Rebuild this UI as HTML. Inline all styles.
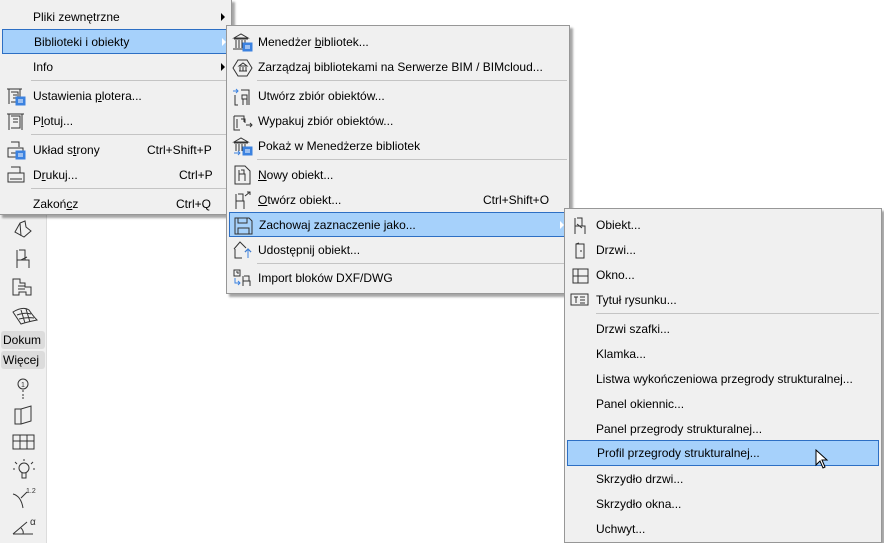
<!DOCTYPE html>
<html><head><meta charset="utf-8"><style>
body{margin:0;width:884px;height:543px;background:#fff;position:relative;overflow:hidden;font-family:"Segoe UI","Liberation Sans",sans-serif;font-size:12px;color:#000}
.tb{position:absolute;left:0;top:0;width:46px;height:543px;background:#f0f0f0;border-right:1px solid #dcdcdc}
.menu{position:absolute;background:#f0f0f0;border:1px solid #979797;box-shadow:3px 3px 2px rgba(0,0,0,.35)}
.it{position:absolute;left:0;right:0;height:25px;line-height:24px;white-space:nowrap}
.it .t{position:absolute}
.it .k{position:absolute}
.hl{background:#a6d1fb;border:1px solid #2d6fc4;box-sizing:border-box;left:2px;right:2px}
.sep{position:absolute;height:1px;background:#c4c4c4}
.ar{position:absolute;width:0;height:0;border-top:4px solid transparent;border-bottom:4px solid transparent;border-left:4px solid #000;top:8px}
.ic{position:absolute;top:4px}
u{text-decoration:underline}
.btn{position:absolute;left:1px;width:44px;height:18px;background:#dcdcdc;border-radius:3px;line-height:18px;font-size:12px;padding-left:2px;box-sizing:border-box;overflow:hidden;white-space:nowrap}
.ti{position:absolute;left:11px}
</style></head><body>
<div class="tb"></div>
<!-- toolbar icons -->
<svg class="ti" style="top:218px" width="24" height="22" viewBox="0 0 24 22" fill="none" stroke="#333"><path d="M4 14 L9 5 L14 3 L15 9 L20 13 L13 19 Z M9 5 L10 18"/></svg>
<svg class="ti" style="top:248px" width="24" height="22" viewBox="0 0 24 22" fill="none" stroke="#333"><path d="M6 2 v18 M6 12 h12 v8 M8 2 h6 v10 M10 12 l6 -3"/></svg>
<svg class="ti" style="top:276px" width="24" height="22" viewBox="0 0 24 22" fill="none" stroke="#333"><path d="M2 3 h7 v4 h5 v4 h6 v8 h-5 v-3 h-7 v3 h-6 Z M7 10 h7 M7 13 h7"/></svg>
<svg class="ti" style="top:304px" width="28" height="22" viewBox="0 0 28 22" fill="none" stroke="#333"><path d="M2 8 Q12 2 18 6 Q22 12 26 16 Q16 18 10 20 Q6 14 2 8 Z M6 11 Q14 8 20 10 M8 15 Q16 13 23 14 M10 6 L14 19 M15 5 L19 18"/></svg>
<div class="btn" style="top:331px">Dokum</div>
<div class="btn" style="top:351px">Więcej</div>
<svg class="ti" style="top:376px" width="24" height="24" viewBox="0 0 24 24" fill="none" stroke="#333"><circle cx="12" cy="8" r="5"/><path d="M12 14 v2 M12 18 v2 M12 21 v2"/><text x="10" y="11" font-size="7" fill="#333" stroke="none">1</text></svg>
<svg class="ti" style="top:404px" width="24" height="22" viewBox="0 0 24 22" fill="none" stroke="#333"><path d="M4 5 h6 v15 h-6 Z M10 5 l10 -3 v15 l-10 3"/></svg>
<svg class="ti" style="top:431px" width="26" height="22" viewBox="0 0 26 22" fill="none" stroke="#333"><path d="M2 4 h21 v14 h-21 Z M2 10 h21 M9 4 v14 M16 4 v14"/></svg>
<svg class="ti" style="top:458px" width="26" height="24" viewBox="0 0 26 24" fill="none" stroke="#333"><circle cx="13" cy="10" r="5"/><path d="M11 15 v5 h4 v-5 M13 1 v2 M4 4 l2 2 M22 4 l-2 2 M2 11 h2 M22 11 h2"/></svg>
<svg class="ti" style="top:486px" width="28" height="24" viewBox="0 0 28 24" fill="none" stroke="#333"><path d="M2 8 Q10 10 12 22 M16 6 L10 12"/><text x="15" y="7" font-size="7" fill="#333" stroke="none">1.2</text></svg>
<svg class="ti" style="top:514px" width="30" height="24" viewBox="0 0 30 24" fill="none" stroke="#333"><path d="M2 20 h20 M2 20 L16 8 M10 14 Q13 17 12 20"/><text x="19" y="11" font-size="10" fill="#333" stroke="none">α</text></svg>

<!-- menu 1 -->
<div class="menu" style="left:-1px;top:-1px;width:231px;height:214px">
 <div class="it" style="top:5px"><span class="t" style="left:33px">Pliki zewnętrzne</span><div class="ar" style="left:221px"></div></div>
 <div class="it hl" style="top:29px"><span class="t" style="left:31px">Biblioteki i obiekty</span><div class="ar" style="left:219px;border-left-color:#fff"></div></div>
 <div class="it" style="top:55px"><span class="t" style="left:33px">Info</span><div class="ar" style="left:221px"></div></div>
 <div class="sep" style="left:31px;right:1px;top:80px"></div>
 <div class="it" style="top:84px"><svg class="ic" style="left:6px;top:3px" width="20" height="20" viewBox="0 0 20 20" fill="none" stroke="#333"><path d="M1 2 h15 M3 2 v15 M14 2 v8 M5 5 h7 v10 h-7 M7 8 h4 M7 11 h4"/><rect x="10" y="10" width="9" height="8" fill="#3b82e0" stroke="#3b82e0"/><path d="M12 13 h5 M12 15 h5" stroke="#fff"/></svg><span class="t" style="left:33px">Ustawienia <u>p</u>lotera...</span></div>
 <div class="it" style="top:109px"><svg class="ic" style="left:6px;top:3px" width="20" height="20" viewBox="0 0 20 20" fill="none" stroke="#333"><path d="M1 2 h17 M3 2 v16 M16 2 v16 M5 4 h9 v12 h-9 M7 7 h5 M7 10 h5"/></svg><span class="t" style="left:33px">P<u>l</u>otuj...</span></div>
 <div class="sep" style="left:31px;right:1px;top:134px"></div>
 <div class="it" style="top:138px"><svg class="ic" style="left:6px;top:3px" width="20" height="20" viewBox="0 0 20 20" fill="none" stroke="#333"><path d="M5 1 h8 v5 M2 7 h15 v9 h-15 Z M5 12 h7"/><rect x="10" y="10" width="9" height="8" fill="#3b82e0" stroke="#3b82e0"/><path d="M12 13 h5 M12 15 h5" stroke="#fff"/></svg><span class="t" style="left:33px">Układ s<u>t</u>rony</span><span class="k" style="left:147px">Ctrl+Shift+P</span></div>
 <div class="it" style="top:163px"><svg class="ic" style="left:6px;top:3px" width="20" height="20" viewBox="0 0 20 20" fill="none" stroke="#333"><path d="M5 1 h9 v6 M2 7 h16 v9 h-16 Z M4 13 h12"/></svg><span class="t" style="left:33px">D<u>r</u>ukuj...</span><span class="k" style="left:179px">Ctrl+P</span></div>
 <div class="sep" style="left:31px;right:1px;top:188px"></div>
 <div class="it" style="top:192px"><span class="t" style="left:33px">Zakoń<u>c</u>z</span><span class="k" style="left:176px">Ctrl+Q</span></div>
</div>

<!-- menu 2 -->
<div class="menu" style="left:226px;top:25px;width:342px;height:267px">
 <div class="it" style="top:4px"><svg class="ic" style="left:5px;top:3px" width="22" height="20" viewBox="0 0 22 20" fill="none" stroke="#333"><path d="M2 5 L9 1 L16 5 Z M2 6 h14 M4 7 v8 M7 7 v8 M10 7 v8 M13 7 v6 M1 16 h10"/><rect x="11" y="10" width="9" height="8" fill="#3b82e0" stroke="#3b82e0"/><path d="M13 13 h5 M13 15 h5" stroke="#fff"/></svg><span class="t" style="left:31px">Menedżer <u>b</u>ibliotek...</span></div>
 <div class="it" style="top:29px"><svg class="ic" style="left:5px;top:3px" width="22" height="20" viewBox="0 0 22 20" fill="none" stroke="#333"><path d="M6 2 h9 l5 8 l-5 8 h-9 l-5 -8 Z M7 8 L11 5 L15 8 Z M8 9 v4 M11 9 v4 M14 9 v4 M7 13 h8"/></svg><span class="t" style="left:31px">Zarządzaj bibliotekami na Serwerze BIM / BIMcloud...</span></div>
 <div class="sep" style="left:30px;right:2px;top:54px"></div>
 <div class="it" style="top:58px"><svg class="ic" style="left:5px;top:3px" width="22" height="20" viewBox="0 0 22 20" fill="none" stroke="#333"><path d="M1 4 h5 M4 2 l2 2 l-2 2" stroke="#3b82e0"/><path d="M3 8 v10 h3 M9 3 h8 v15 M10 8 h5 v4 h-5 Z M11 12 v6 M15 12 v6"/></svg><span class="t" style="left:31px">Utwórz zbiór obiektów...</span></div>
 <div class="it" style="top:83px"><svg class="ic" style="left:5px;top:3px" width="22" height="20" viewBox="0 0 22 20" fill="none" stroke="#333"><path d="M2 4 h10 v6 M2 4 v14 h6 M5 7 v9 M9 7 h4 v4 M14 13 h6 M18 11 l2 2 l-2 2" /></svg><span class="t" style="left:31px">Wypakuj zbiór obiektów...</span></div>
 <div class="it" style="top:108px"><svg class="ic" style="left:5px;top:3px" width="22" height="20" viewBox="0 0 22 20" fill="none" stroke="#333"><path d="M2 5 L9 1 L16 5 Z M2 6 h14 M4 7 v7 M7 7 v7 M10 7 v7 M13 7 v3"/><path d="M2 16 h6 M6 14 l2 2 l-2 2" stroke="#3b82e0"/><rect x="11" y="10" width="9" height="8" fill="#3b82e0" stroke="#3b82e0"/><path d="M13 13 h5 M13 15 h5" stroke="#fff"/></svg><span class="t" style="left:31px">Pokaż w Menedżerze bibliotek</span></div>
 <div class="sep" style="left:30px;right:2px;top:133px"></div>
 <div class="it" style="top:137px"><svg class="ic" style="left:5px;top:2px" width="22" height="20" viewBox="0 0 22 20" fill="none" stroke="#333"><path d="M3 1 h10 l5 5 v13 h-15 Z M7 5 v11 M7 9 h6 v7 M9 5 h3 v4"/></svg><span class="t" style="left:31px"><u>N</u>owy obiekt...</span></div>
 <div class="it" style="top:162px"><svg class="ic" style="left:5px;top:2px" width="22" height="20" viewBox="0 0 22 20" fill="none" stroke="#333"><path d="M4 4 v15 M4 11 h8 v8 M6 4 h5 v7 M13 6 l5 -4 M15 2 h3 v3"/></svg><span class="t" style="left:31px"><u>O</u>twórz obiekt...</span><span class="k" style="left:256px">Ctrl+Shift+O</span></div>
 <div class="it hl" style="top:186px"><svg class="ic" style="left:3px;top:3px" width="22" height="20" viewBox="0 0 22 20" fill="none" stroke="#333"><path d="M2 2 h14 l3 3 v13 h-17 Z M5 2 v5 h9 v-5 M5 18 v-6 h11 v6"/></svg><span class="t" style="left:29px">Zachowaj zaznaczenie jako...</span><div class="ar" style="left:330px;border-left-color:#fff"></div></div>
 <div class="it" style="top:212px"><svg class="ic" style="left:5px;top:2px" width="22" height="20" viewBox="0 0 22 20" fill="none" stroke="#333"><path d="M2 9 L8 2 L14 8 M3 9 v9 h7 M16 18 v-9 M13 12 l3 -3 l3 3" /><path d="M16 18 v-9 M13 12 l3 -3 l3 3" stroke="#3b82e0"/></svg><span class="t" style="left:31px">Udostępnij obiekt...</span></div>
 <div class="sep" style="left:30px;right:2px;top:237px"></div>
 <div class="it" style="top:240px"><svg class="ic" style="left:5px;top:2px" width="22" height="20" viewBox="0 0 22 20" fill="none" stroke="#333"><path d="M2 2 h6 v6 h-6 Z M4 4 h2 v2 M11 8 v10 M11 13 h7 v5 M12 8 h5 v5"/><path d="M3 10 v5 h5 M6 13 l2 2 l-2 2" stroke="#3b82e0"/></svg><span class="t" style="left:31px">Import bloków DXF/DWG</span></div>
</div>

<!-- menu 3 -->
<div class="menu" style="left:564px;top:208px;width:316px;height:333px">
 <div class="it" style="top:4px"><svg class="ic" style="left:6px;top:3px" width="20" height="20" viewBox="0 0 20 20" fill="none" stroke="#333"><path d="M4 2 v16 M4 10 h10 v8 M6 2 h5 v8 M6 8 l5 4"/></svg><span class="t" style="left:31px">Obiekt...</span></div>
 <div class="it" style="top:29px"><svg class="ic" style="left:6px;top:3px" width="20" height="20" viewBox="0 0 20 20" fill="none" stroke="#333"><path d="M5 3 h8 v14 h-8 Z M5 3 l3 -1 M10 9 v2"/></svg><span class="t" style="left:31px">Drzwi...</span></div>
 <div class="it" style="top:54px"><svg class="ic" style="left:6px;top:3px" width="20" height="20" viewBox="0 0 20 20" fill="none" stroke="#333"><path d="M2 3 h15 v14 h-15 Z M2 10 h15 M7 3 v14"/></svg><span class="t" style="left:31px">Okno...</span></div>
 <div class="it" style="top:79px"><svg class="ic" style="left:5px;top:4px" width="20" height="16" viewBox="0 0 20 16" fill="none" stroke="#333"><path d="M1 2 h17 v11 h-17 Z M4 5 h4 M6 5 v6 M10 5 h5 M10 8 h5 M10 11 h5"/></svg><span class="t" style="left:31px">Tytuł rysunku...</span></div>
 <div class="sep" style="left:31px;right:2px;top:104px"></div>
 <div class="it" style="top:108px"><span class="t" style="left:31px">Drzwi szafki...</span></div>
 <div class="it" style="top:133px"><span class="t" style="left:31px">Klamka...</span></div>
 <div class="it" style="top:158px"><span class="t" style="left:31px">Listwa wykończeniowa przegrody strukturalnej...</span></div>
 <div class="it" style="top:183px"><span class="t" style="left:31px">Panel okiennic...</span></div>
 <div class="it" style="top:208px"><span class="t" style="left:31px">Panel przegrody strukturalnej...</span></div>
 <div class="it hl" style="top:231px;height:26px"><span class="t" style="left:29px">Profil przegrody strukturalnej...</span></div>
 <div class="it" style="top:258px"><span class="t" style="left:31px">Skrzydło drzwi...</span></div>
 <div class="it" style="top:283px"><span class="t" style="left:31px">Skrzydło okna...</span></div>
 <div class="it" style="top:308px"><span class="t" style="left:31px">Uchwyt...</span></div>
</div>
<!-- cursor -->
<svg style="position:absolute;left:815px;top:449px" width="16" height="22" viewBox="0 0 16 22"><path d="M1 1 L1 16 L5 12 L8 19 L10 18 L7 11 L12 11 Z" fill="#fff" stroke="#000" stroke-width="1"/></svg>
</body></html>
